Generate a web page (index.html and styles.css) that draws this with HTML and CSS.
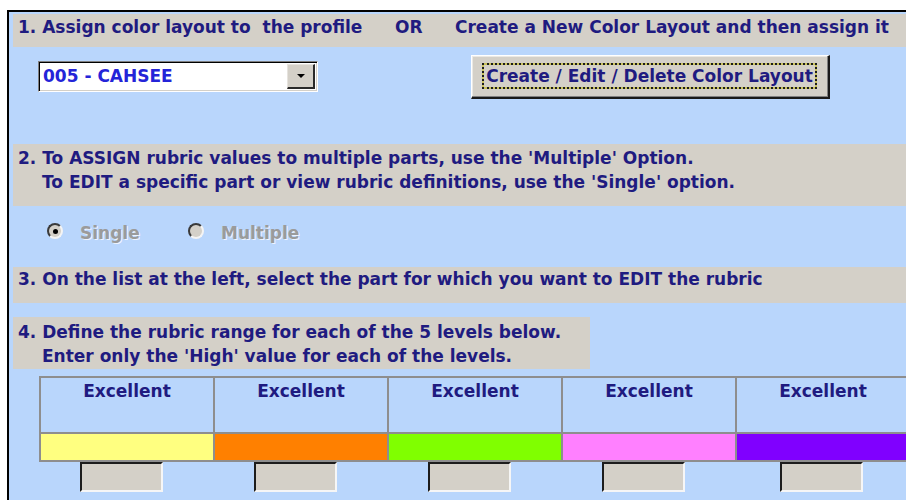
FILE: index.html
```html
<!DOCTYPE html>
<html lang="en">
<head>
<meta charset="utf-8">
<title>Rubric Color Layout</title>
<link rel="stylesheet" href="styles.css">
</head>
<body>
<div class="form">
  <div class="band band-1">
    <span class="step-assign">1. Assign color layout to&nbsp; the profile</span>
    <span class="step-or">OR</span>
    <span>Create a New Color Layout and then assign it</span>
  </div>

  <div class="layout-row">
    <div class="combo">
      <span class="combo-value">005 - CAHSEE</span>
      <span class="combo-btn"><span class="combo-arrow"></span></span>
    </div>
    <button class="cmd" type="button"><span class="cmd-focus">Create / Edit / Delete Color Layout</span></button>
  </div>

  <div class="band band-2">
    <div>2. To ASSIGN rubric values to multiple parts, use the 'Multiple' Option.</div>
    <div class="indent">To EDIT a specific part or view rubric definitions, use the 'Single' option.</div>
  </div>

  <div class="options">
    <label class="radio radio-single"><span class="radio-dot checked"></span>Single</label>
    <label class="radio"><span class="radio-dot"></span>Multiple</label>
  </div>

  <div class="band band-3">3. On the list at the left, select the part for which you want to EDIT the rubric</div>

  <div class="band band-4">
    <div>4. Define the rubric range for each of the 5 levels below.</div>
    <div class="indent">Enter only the 'High' value for each of the levels.</div>
  </div>

  <div class="levels">
    <div class="level-head">Excellent</div>
    <div class="level-head">Excellent</div>
    <div class="level-head">Excellent</div>
    <div class="level-head">Excellent</div>
    <div class="level-head">Excellent</div>
    <div class="swatch swatch-yellow"></div>
    <div class="swatch swatch-orange"></div>
    <div class="swatch swatch-green"></div>
    <div class="swatch swatch-pink"></div>
    <div class="swatch swatch-purple"></div>
  </div>

  <div class="values">
    <div class="value-cell"><span class="value-box"></span></div>
    <div class="value-cell"><span class="value-box"></span></div>
    <div class="value-cell"><span class="value-box"></span></div>
    <div class="value-cell"><span class="value-box"></span></div>
    <div class="value-cell value-last"><span class="value-box"></span></div>
  </div>
</div>
</body>
</html>
```

FILE: styles.css
```css
html, body {
  margin: 0;
  padding: 0;
  background: #ffffff;
  overflow: hidden;
}

body {
  font-family: "DejaVu Sans", Verdana, sans-serif;
  font-weight: bold;
  font-size: 17px;
  color: #1f1b80;
}

/* form panel: the right side runs on past the window edge */
.form {
  margin: 10px 0 0 7px;
  width: 893px;
  height: 486px;
  overflow: hidden;
  border-top: 2px solid #000;
  border-left: 2px solid #000;
  background: #b9d6fc;
  padding: 2px 0 0 4px;
  box-sizing: content-box;
}

/* grey instruction bands */
.band {
  background: #d4d0c8;
  line-height: 24px;
  padding-left: 5px;
  box-sizing: border-box;
  white-space: nowrap;
}

.band-1 {
  height: 33px;
  padding-top: 1px;
  display: flex;
}

.step-assign { width: 377px; flex: none; }
.step-or { width: 60px; flex: none; }

.band-2 {
  height: 62px;
  padding-top: 2px;
}

.band-3 {
  height: 36px;
  padding-top: 0;
}

.band-4 {
  height: 52px;
  width: 577px;
  padding-top: 3px;
  margin-top: 14px;
}

.indent { padding-left: 24px; }

/* combo box + command button row */
.layout-row {
  height: 97px;
  padding-top: 8px;
  box-sizing: border-box;
  display: flex;
  align-items: flex-start;
}

.combo {
  margin: 6px 0 0 25px;
  width: 280px;
  height: 31px;
  flex: none;
  box-sizing: border-box;
  background: #fff;
  border: 1px solid;
  border-color: #808080 #ffffff #ffffff #808080;
  box-shadow: inset 1px 1px 0 #000, inset -1px -1px 0 #d4d0c8;
  display: flex;
  align-items: center;
  padding: 1px 2px 2px 4px;
}

.combo-value {
  flex: 1;
  color: #2424d8;
  line-height: 24px;
}

.combo-btn {
  width: 28px;
  height: 25px;
  box-sizing: border-box;
  background: #d4d0c8;
  border-style: solid;
  border-width: 1px 2px 2px 1px;
  border-color: #e6e3de #2a2a2a #2a2a2a #e6e3de;
  display: flex;
  align-items: center;
  justify-content: center;
}

.combo-arrow {
  width: 0;
  height: 0;
  border-left: 4px solid transparent;
  border-right: 4px solid transparent;
  border-top: 4px solid #000;
}

.cmd {
  margin-left: 153px;
  width: 359px;
  height: 44px;
  flex: none;
  box-sizing: border-box;
  background: #d4d0c8;
  font: inherit;
  color: #1f1b80;
  border-style: solid;
  border-width: 1px 2px 2px 1px;
  border-color: #ffffff #1a1a1a #1a1a1a #ffffff;
  box-shadow: inset -1px -1px 0 #808080, inset 1px 1px 0 #ebe9e4;
  padding: 7px 0 0 10px;
  display: flex;
  align-items: flex-start;
  cursor: default;
}

.cmd-focus {
  width: 335px;
  height: 26px;
  box-sizing: border-box;
  border: 2px dotted #1c1c1c;
  background: linear-gradient(#d4d0c8, #d4d0c8) padding-box,
              linear-gradient(#c9c25a, #c9c25a) border-box;
  line-height: 22px;
  text-align: center;
  white-space: nowrap;
}

/* option row (disabled radios) */
.options {
  height: 61px;
  box-sizing: border-box;
  padding: 15px 0 0 34px;
  display: flex;
  align-items: flex-start;
}

.radio {
  display: flex;
  align-items: center;
  line-height: 24px;
  color: #9b9b9b;
  text-shadow: 1px 1px 0 #eef4ff;
}

.radio-single { width: 141px; }

.radio-dot {
  width: 16px;
  height: 16px;
  box-sizing: border-box;
  border-radius: 50%;
  background: #d4d0c8;
  border: 2px solid;
  border-color: #3a3a3a #f4f4f4 #f4f4f4 #3a3a3a;
  margin: 0 17px 4px 0;
  display: flex;
  align-items: center;
  justify-content: center;
}

.radio-dot.checked::after {
  content: "";
  width: 5px;
  height: 5px;
  border-radius: 50%;
  background: #000;
}

/* rubric level table */
.levels {
  margin: 7px 0 0 26px;
  display: grid;
  grid-template-columns: repeat(5, 174px);
  border-top: 2px solid #8e8e8e;
  border-left: 2px solid #8e8e8e;
  width: max-content;
}

.level-head {
  height: 56px;
  box-sizing: border-box;
  border-right: 2px solid #8e8e8e;
  border-bottom: 2px solid #8e8e8e;
  text-align: center;
  line-height: 24px;
  padding-top: 1px;
}

.swatch {
  height: 28px;
  box-sizing: border-box;
  border-right: 2px solid #8e8e8e;
  border-bottom: 2px solid #8e8e8e;
}

.swatch-yellow { background: #ffff80; }
.swatch-orange { background: #ff8000; }
.swatch-green { background: #80ff00; }
.swatch-pink { background: #ff80ff; }
.swatch-purple { background: #8000ff; }

.values {
  margin-left: 28px;
  display: grid;
  grid-template-columns: repeat(5, 174px);
}

.value-cell {
  height: 31px;
  padding-left: 39px;
}

.value-last { padding-left: 43px; }

.value-box {
  display: block;
  width: 83px;
  height: 30px;
  box-sizing: border-box;
  background: #d4d0c8;
  border: 2px solid;
  border-color: #1c1c1c #f6f6f6 #f6f6f6 #1c1c1c;
}
```
